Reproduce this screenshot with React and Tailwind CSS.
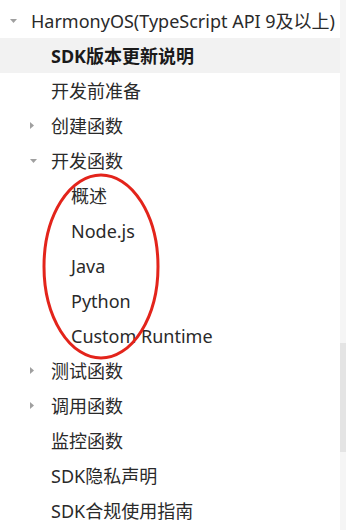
import React from 'react';

// Tree nav: level decides indent, arrow is 'down' | 'right' | null
const items = [
    { label: 'HarmonyOS(TypeScript API 9及以上)', level: 0, arrow: 'down' },
    { label: 'SDK版本更新说明', level: 1, active: true },
    { label: '开发前准备', level: 1 },
    { label: '创建函数', level: 1, arrow: 'right' },
    { label: '开发函数', level: 1, arrow: 'down' },
    { label: '概述', level: 2 },
    { label: 'Node.js', level: 2 },
    { label: 'Java', level: 2 },
    { label: 'Python', level: 2 },
    { label: 'Custom Runtime', level: 2 },
    { label: '测试函数', level: 1, arrow: 'right' },
    { label: '调用函数', level: 1, arrow: 'right' },
    { label: '监控函数', level: 1 },
    { label: 'SDK隐私声明', level: 1 },
    { label: 'SDK合规使用指南', level: 1 },
];

const Arrow = ({ dir }) => {
    if (dir === 'down') {
        return (
            <svg width="7" height="4" viewBox="0 0 7 4">
                <path d="M0 0 L7 0 L3.5 4 Z" fill="#a0a0a0" />
            </svg>
        );
    }
    return (
        <svg width="4" height="7" viewBox="0 0 4 7">
            <path d="M0 0 L4 3.5 L0 7 Z" fill="#a0a0a0" />
        </svg>
    );
};

const indent = ['pl-[10px]', 'pl-[30px]', 'pl-[50px]'];

export default function App() {
    return (
        <div
            className="relative flex w-[346px] h-[530px] bg-white overflow-hidden"
            style={{ fontFamily: '"Noto Sans", "Noto Sans CJK SC", sans-serif' }}
        >
            <div className="flex-1 pt-[3px]">
                {items.map((item, i) => (
                    <div
                        key={i}
                        className={`flex items-center h-[35px] ${indent[item.level]} ${item.active ? 'bg-[#f2f2f2]' : ''}`}
                    >
                        <span className="w-[21px] flex items-center justify-start">
                            {item.arrow && <Arrow dir={item.arrow} />}
                        </span>
                        <span
                            className={`text-[18px] leading-none whitespace-nowrap ${item.active ? 'font-bold text-[#1a1a1a]' : 'text-[#2a2a2a]'}`}
                        >
                            {item.label}
                        </span>
                    </div>
                ))}
            </div>

            {/* scrollbar track */}
            <div className="w-[6px] h-full bg-[#f5f5f5] flex flex-col">
                <div className="h-[343px]" />
                <div className="h-[109px] bg-[#e4e4e4]" />
            </div>

            {/* red annotation ellipse */}
            <svg className="absolute left-0 top-0 pointer-events-none" width="346" height="530">
                <ellipse cx="101" cy="266.5" rx="57" ry="91.5" fill="none" stroke="#e3241b" strokeWidth="3" />
            </svg>
        </div>
    );
}
